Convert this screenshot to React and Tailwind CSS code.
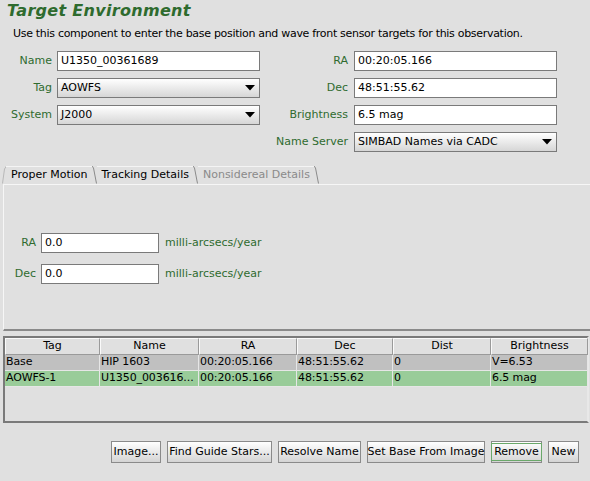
import React from "react";

const F = { fontFamily: '"DejaVu Sans", "Liberation Sans", sans-serif' };

function Field({ value, w = "w-[203px]" }) {
  return (
    <div className={`${w} h-[20px] border border-[#7a7a7a] bg-white flex items-center pl-[3px] text-[11px] text-black whitespace-nowrap`}>
      {value}
    </div>
  );
}

function Select({ value, w = "w-[203px]" }) {
  return (
    <div className={`${w} h-[20px] border border-[#7a7a7a] bg-gradient-to-b from-[#ffffff] to-[#d6d6d6] flex items-center justify-between pl-[3px] pr-[4px] text-[11px] text-black`}>
      <span>{value}</span>
      <svg width="10" height="6" viewBox="0 0 10 6"><polygon points="0,0 10,0 5,5.5" fill="#000" /></svg>
    </div>
  );
}

function Label({ children, w }) {
  return <div className={`${w} text-right text-[11px] text-[#2f6b2f] whitespace-nowrap`}>{children}</div>;
}

function Tab({ children, first, disabled }) {
  return (
    <div className="flex items-end h-[19px]">
      {first && (
        <svg width="5" height="19" viewBox="0 0 5 19" className="-mr-[1px]">
          <polyline points="0.5,18.5 2.5,4 4.5,1" fill="none" stroke="#b8b8b8" strokeWidth="1" />
        </svg>
      )}
      <div className={`h-[18px] flex items-center px-[5px] text-[11px] border-t border-[#f4f4f4] bg-[#e0e0e0] whitespace-nowrap ${disabled ? "text-[#8a8a8a]" : "text-black"}`}>
        {children}
      </div>
      <svg width="5" height="19" viewBox="0 0 5 19" className="-ml-[1px]">
        <polyline points="0,1 1.5,3 4.5,18.5" fill="none" stroke="#8a8a8a" strokeWidth="1" />
      </svg>
    </div>
  );
}

function Btn({ children, w, focus }) {
  return (
    <div className={`${w} h-[22px] border border-[#8a8a8a] bg-gradient-to-b from-[#ffffff] to-[#d4d4d4] flex items-center justify-center text-[11px] text-black whitespace-nowrap`}>
      <div className={`${focus ? "border border-[#6aa86a] px-[2px]" : ""} leading-[16px]`}>{children}</div>
    </div>
  );
}

export default function App() {
  const cols = ["Tag", "Name", "RA", "Dec", "Dist", "Brightness"];
  const rows = [
    { bg: "bg-[#c0c0c0]", cells: ["Base", "HIP 1603", "00:20:05.166", "48:51:55.62", "0", "V=6.53"] },
    { bg: "bg-[#99cc99]", cells: ["AOWFS-1", "U1350_003616...", "00:20:05.166", "48:51:55.62", "0", "6.5 mag"] },
  ];
  return (
    <div style={F} className="w-[590px] h-[481px] bg-[#e0e0e0] overflow-hidden text-black">
      <div className="pl-[7px] h-[22px] leading-[22px] text-[16px] font-bold italic text-[#2e6b2e] tracking-[0.3px]">Target Environment</div>
      <div className="pl-[13px] mt-[5px] h-[14px] leading-[14px] text-[11px] tracking-[-0.3px] whitespace-nowrap">
        Use this component to enter the base position and wave front sensor targets for this observation.
      </div>

      <div className="flex mt-[10px]">
        <div className="flex flex-col gap-[7px]">
          <div className="flex items-center gap-[5px]"><Label w="w-[52px]">Name</Label><Field value="U1350_00361689" /></div>
          <div className="flex items-center gap-[5px]"><Label w="w-[52px]">Tag</Label><Select value="AOWFS" /></div>
          <div className="flex items-center gap-[5px]"><Label w="w-[52px]">System</Label><Select value="J2000" /></div>
        </div>
        <div className="flex flex-col gap-[7px]">
          <div className="flex items-center gap-[6px]"><Label w="w-[88px]">RA</Label><Field value="00:20:05.166" /></div>
          <div className="flex items-center gap-[6px]"><Label w="w-[88px]">Dec</Label><Field value="48:51:55.62" /></div>
          <div className="flex items-center gap-[6px]"><Label w="w-[88px]">Brightness</Label><Field value="6.5 mag" /></div>
          <div className="flex items-center gap-[6px]"><Label w="w-[88px]">Name Server</Label><Select value="SIMBAD Names via CADC" /></div>
        </div>
      </div>

      <div className="mt-[13px] ml-[2px] flex items-end">
        <Tab first>Proper Motion</Tab>
        <Tab>Tracking Details</Tab>
        <Tab disabled>Nonsidereal Details</Tab>
      </div>
      <div className="ml-[3px] h-[147px] border-t border-l border-[#f6f6f6] border-b-2 border-b-[#8a8a8a] flex flex-col justify-end pb-[45px] gap-[11px]">
        <div className="flex items-center">
          <Label w="w-[32px]">RA</Label>
          <div className="ml-[5px]"><Field value="0.0" w="w-[118px]" /></div>
          <div className="ml-[6px] text-[11px] text-[#2f6b2f]">milli-arcsecs/year</div>
        </div>
        <div className="flex items-center">
          <Label w="w-[32px]">Dec</Label>
          <div className="ml-[5px]"><Field value="0.0" w="w-[118px]" /></div>
          <div className="ml-[6px] text-[11px] text-[#2f6b2f]">milli-arcsecs/year</div>
        </div>
      </div>

      <div className="mt-[5px] ml-[3px] w-[586px] h-[87px] border-2 border-[#7a7a7a] border-r-[#e8e8e8] bg-[#e0e0e0]">
        <div className="grid grid-cols-[95px_99px_98px_96px_98px_97px]">
          {cols.map((c) => (
            <div key={c} className="h-[17px] border-t border-l border-[#fafafa] border-r border-r-[#9a9a9a] border-b border-b-[#9a9a9a] flex items-center justify-center text-[11px]">{c}</div>
          ))}
          {rows.map((r, i) =>
            r.cells.map((c, j) => (
              <div key={i + "-" + j} className={`${r.bg} h-[16px] border-r border-b border-[#e6e6e6] flex items-center pl-[1px] text-[11px] tracking-[-0.1px] whitespace-nowrap overflow-hidden`}>{c}</div>
            ))
          )}
        </div>
      </div>

      <div className="mt-[18px] flex justify-end gap-[6px] pr-[11px]">
        <Btn w="w-[50px]">Image...</Btn>
        <Btn w="w-[105px]">Find Guide Stars...</Btn>
        <Btn w="w-[83px]">Resolve Name</Btn>
        <Btn w="w-[118px]">Set Base From Image</Btn>
        <Btn w="w-[51px]" focus>Remove</Btn>
        <Btn w="w-[31px]">New</Btn>
      </div>
    </div>
  );
}
